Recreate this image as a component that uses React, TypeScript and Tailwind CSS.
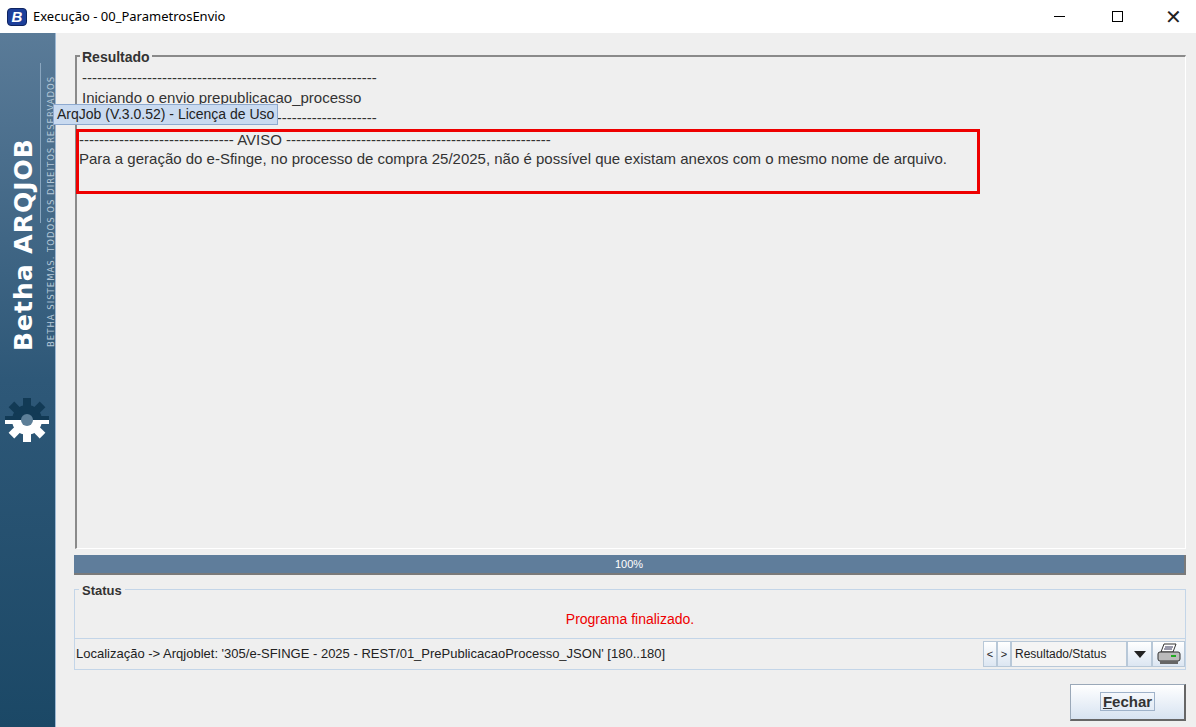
import React from "react";

const F = { fontFamily: "'Liberation Sans', Arial, sans-serif" };

function Gear() {
  const teeth = Array.from({ length: 8 }, (_, i) => i * 45);
  return (
    <svg width="50" height="50" viewBox="-25 -25 50 50">
      <defs>
        <clipPath id="bot"><rect x="-25" y="0" width="50" height="25" /></clipPath>
        <clipPath id="top"><rect x="-25" y="-25" width="50" height="25" /></clipPath>
      </defs>
      <g clipPath="url(#top)" fill="#123a55">
        <circle r="15" />
        {teeth.map((a) => <rect key={a} x="-4" y="-22" width="8" height="10" transform={`rotate(${a})`} />)}
      </g>
      <g clipPath="url(#bot)" fill="#ffffff">
        <circle r="15" />
        {teeth.map((a) => <rect key={a} x="-4" y="-22" width="8" height="10" transform={`rotate(${a})`} />)}
      </g>
      <circle r="6" fill="#5d7f98" />
    </svg>
  );
}

export default function App() {
  return (
    <div className="relative w-[1196px] h-[727px] bg-[#efefef] overflow-hidden flex flex-col text-[#222]" style={F}>
      {/* Title bar */}
      <div className="h-[33px] bg-white flex items-center shrink-0">
        <div className="ml-[7px] w-[20px] h-[18px] rounded-[4px] bg-[#1d3f9a] border border-[#0e2460] flex items-center justify-center text-white font-bold italic text-[15px] leading-none">B</div>
        <span className="ml-[6px] text-[13px] text-black" style={{ fontFamily: "'Noto Sans', sans-serif" }}>Execução - 00_ParametrosEnvio</span>
        <div className="ml-auto flex items-center h-full">
          <div className="w-[46px] flex justify-center"><div className="w-[11px] h-px bg-black" /></div>
          <div className="w-[46px] flex justify-center ml-[12px]"><div className="w-[11px] h-[11px] border border-black" /></div>
          <div className="w-[46px] flex justify-center ml-[10px] text-[20px] font-light leading-none">✕</div>
        </div>
      </div>

      <div className="flex flex-1">
        {/* Sidebar */}
        <div className="w-[56px] shrink-0 relative bg-gradient-to-b from-[#5a7b98] via-[#2e5878] to-[#1b4866] border-r border-[#9db8d3] overflow-hidden">
          <div className="absolute left-[40px] top-[30px] w-px h-[160px] bg-[#8aa6bf]" />
          <div className="absolute left-[5px] top-[318px] origin-top-left -rotate-90 whitespace-nowrap text-white font-bold text-[25px] tracking-[1px]" style={{ fontFamily: "'DejaVu Sans', sans-serif" }}>Betha ARQJOB</div>
          <div className="absolute left-[45px] top-[314px] origin-top-left -rotate-90 whitespace-nowrap text-[#b5c8d8] text-[8.5px] tracking-[1px]" style={{ fontFamily: "'DejaVu Sans', sans-serif" }}>BETHA SISTEMAS. TODOS OS DIREITOS RESERVADOS</div>
          <div className="absolute left-[2px] top-[362px]"><Gear /></div>
        </div>

        {/* Main */}
        <div className="flex-1 flex flex-col pl-[18px] pr-[10px] pt-[22px]">
          {/* Resultado */}
          <div className="relative h-[494px] border-l-2 border-t-2 border-[#8a8a8a] border-r border-r-white border-b border-b-white ml-[1px]">
            <div className="absolute -top-[10px] left-[3px] bg-[#efefef] px-[2px] text-[14px] font-bold text-[#333]">Resultado</div>
            <div className="pt-[11px] pl-[5px] text-[15px] leading-[20px] text-[#333]">
              <div>-----------------------------------------------------------</div>
              <div>Iniciando o envio prepublicacao_processo</div>
              <div>-----------------------------------------------------------</div>
            </div>
            <div className="ml-[-1px] mt-[1px] w-[904px] h-[65px] border-[3px] border-[#ee0000] pl-[0px] text-[15px] leading-[19px] text-[#333] whitespace-nowrap">
              <div className="-mt-[2px]">------------------------------- AVISO -----------------------------------------------------</div>
              <div>Para a geração do e-Sfinge, no processo de compra 25/2025, não é possível que existam anexos com o mesmo nome de arquivo.</div>
            </div>
          </div>

          {/* Progress */}
          <div className="mt-[6px] h-[20px] bg-[#5f7d9b] border-b-2 border-r-2 border-[#7a7a7a] flex items-center justify-center text-white text-[11px]">100%</div>

          {/* Status */}
          <div className="relative mt-[14px] h-[81px] border border-[#c3d5e8] flex flex-col">
            <div className="absolute -top-[9px] left-[4px] bg-[#efefef] px-[3px] text-[13px] font-bold text-[#333]">Status</div>
            <div className="h-[48px] flex items-end justify-center pb-[8px] text-[14px] text-[#ee0000]">Programa finalizado.</div>
            <div className="flex-1 border-t border-[#c3d5e8] flex items-center">
              <span className="flex-1 text-[13px] text-[#222] pl-[1px] whitespace-nowrap">Localização -&gt; Arqjoblet: '305/e-SFINGE - 2025 - REST/01_PrePublicacaoProcesso_JSON' [180..180]</span>
              <div className="flex h-[26px] items-stretch">
                <div className="w-[14px] border border-[#b8c8d8] bg-gradient-to-b from-white to-[#dce6f2] text-[11px] flex items-center justify-center">&lt;</div>
                <div className="w-[14px] border border-[#b8c8d8] bg-gradient-to-b from-white to-[#dce6f2] text-[11px] flex items-center justify-center">&gt;</div>
                <div className="w-[116px] border border-[#b8c8d8] bg-[#f4f4f4] text-[12px] flex items-center pl-[3px]">Resultado/Status</div>
                <div className="w-[25px] border border-[#b8c8d8] bg-gradient-to-b from-white to-[#dce6f2] flex items-center justify-center">
                  <svg width="12" height="8"><path d="M0 1h12L6 8z" fill="#222" /></svg>
                </div>
                <div className="w-[33px] border border-[#b8c8d8] bg-gradient-to-b from-white to-[#dce6f2] flex items-center justify-center">
                  <svg width="26" height="22" viewBox="0 0 26 22">
                    <path d="M8 1h12l-3 8H5z" fill="#fff" stroke="#333" />
                    <path d="M9 4h8M8 6h8" stroke="#335" />
                    <rect x="2" y="9" width="22" height="9" rx="2" fill="#bbb" stroke="#333" />
                    <rect x="15" y="12" width="5" height="2" fill="#2a2" />
                    <rect x="4" y="18" width="18" height="3" fill="#666" />
                  </svg>
                </div>
              </div>
            </div>
          </div>

          {/* Button */}
          <div className="flex justify-end mt-[14px]">
            <button className="w-[116px] h-[37px] border border-[#9aa8b8] border-b-2 border-r-2 border-b-[#666] border-r-[#666] bg-gradient-to-b from-white to-[#d7e3f1] text-[15px] font-bold text-[#333]">
              <span className="px-[2px] border border-[#9fb2c9]"><span className="underline">F</span>echar</span>
            </button>
          </div>
        </div>
      </div>

      {/* Tooltip */}
      <div className="absolute left-[53px] top-[104px] h-[21px] px-[3px] bg-[#c9daf0] border border-[#8eaad0] text-[14px] text-[#222] flex items-center">ArqJob (V.3.0.52) - Licença de Uso</div>
    </div>
  );
}
